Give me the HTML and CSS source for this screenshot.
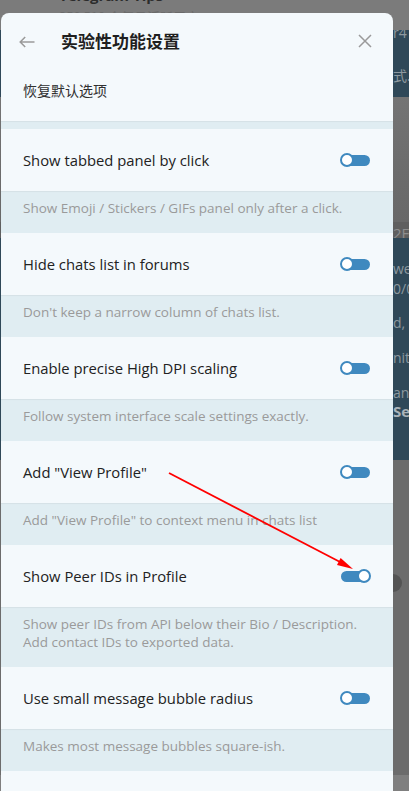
FILE: index.html
```html
<!DOCTYPE html>
<html lang="zh">
<head>
<meta charset="utf-8">
<title>实验性功能设置</title>
<link rel="stylesheet" href="styles.css">
</head>
<body>
<div class="page">
  <div class="backdrop">
    <div class="bg-top">
      <div class="bg-name">Telegram Tips</div>
      <div class="bg-sub">350 510 个每月活跃用户</div>
    </div>
    <div class="bg-band bg-band1">
      <div class="bg-line l1">r4</div>
      <div class="bg-line l2">式...</div>
    </div>
    <div class="bg-photo"></div>
    <div class="bg-label"><span class="bg-frag">2E</span></div>
    <div class="bg-band bg-band2">
      <div class="bg-line l3">we</div>
      <div class="bg-line l4">0/0</div>
      <div class="bg-line l5">d, </div>
      <div class="bg-line l6">nit</div>
      <div class="bg-line l7">an</div>
      <div class="bg-line l8 strong">Se</div>
    </div>
    <div class="bg-gray"><div class="bg-dot"></div></div>
    <div class="bg-foot"></div>
  </div>

  <div class="dialog">
    <div class="dlg-head">
      <svg class="back" width="16" height="12" viewBox="0 0 16 12" aria-hidden="true">
        <path d="M15.5 6H1.2M6.2 1L1.2 6l5 5" fill="none" stroke="#9a9a9a" stroke-width="1.5"/>
      </svg>
      <div class="title">实验性功能设置</div>
      <svg class="close" width="14" height="14" viewBox="0 0 14 14" aria-hidden="true">
        <path d="M1 1l12 12M13 1L1 13" fill="none" stroke="#9a9a9a" stroke-width="1.5"/>
      </svg>
    </div>
    <div class="reset">恢复默认选项</div>
    <div class="gap"></div>

    <div class="opt"><span class="label">Show tabbed panel by click</span><span class="toggle"><i class="track"></i><i class="knob"></i></span></div>
    <div class="desc">Show Emoji / Stickers / GIFs panel only after a click.</div>

    <div class="opt"><span class="label">Hide chats list in forums</span><span class="toggle"><i class="track"></i><i class="knob"></i></span></div>
    <div class="desc">Don't keep a narrow column of chats list.</div>

    <div class="opt"><span class="label">Enable precise High DPI scaling</span><span class="toggle"><i class="track"></i><i class="knob"></i></span></div>
    <div class="desc">Follow system interface scale settings exactly.</div>

    <div class="opt"><span class="label">Add "View Profile"</span><span class="toggle"><i class="track"></i><i class="knob"></i></span></div>
    <div class="desc">Add "View Profile" to context menu in chats list</div>

    <div class="opt"><span class="label">Show Peer IDs in Profile</span><span class="toggle on"><i class="track"></i><i class="knob"></i></span></div>
    <div class="desc">Show peer IDs from API below their Bio / Description.<br>Add contact IDs to exported data.</div>

    <div class="opt"><span class="label">Use small message bubble radius</span><span class="toggle"><i class="track"></i><i class="knob"></i></span></div>
    <div class="desc">Makes most message bubbles square-ish.</div>

    <div class="opt"></div>
  </div>

  <svg class="arrow" width="409" height="791" viewBox="0 0 409 791" aria-hidden="true">
    <line x1="169" y1="473" x2="342" y2="563" stroke="#ff0000" stroke-width="1.8"/>
    <polygon points="353,569 340.6,558.1 337,565.1" fill="#ff0000"/>
  </svg>
</div>
</body>
</html>
```

FILE: styles.css
```css
* { box-sizing: border-box; }
html, body { margin: 0; padding: 0; }
body {
  width: 409px;
  height: 791px;
  overflow: hidden;
  font-family: "Open Sans", "Noto Sans CJK SC", sans-serif;
  background: #6c6c6c;
}
.page {
  position: relative;
  width: 409px;
  height: 791px;
  overflow: hidden;
}

/* ---------- backdrop (dimmed app behind modal) ---------- */
.backdrop {
  display: flex;
  flex-direction: column;
  height: 791px;
}
.bg-top {
  height: 30px;
  background: #7b7b7b;
  padding-left: 59px;
  overflow: hidden;
}
.bg-name {
  margin-top: -13px;
  font-weight: 700;
  font-size: 15px;
  line-height: 16px;
  color: #2c2c2c;
}
.bg-sub {
  margin-top: 6px;
  font-size: 13px;
  line-height: 16px;
  color: #6a6a6a;
  font-family: "Noto Sans CJK SC", sans-serif;
}
.bg-band {
  background: #2f4858;
  overflow: hidden;
  white-space: nowrap;
}
.bg-band1 { height: 67px; }
.bg-band2 { height: 222px; padding-top: 22px; }
.bg-line {
  padding-left: 393px;
  font-size: 14px;
  line-height: 18px;
  color: #8d989f;
}
.bg-band1 .l1 { margin-top: -6px; }
.bg-band1 .l2 { margin-top: 24px; font-family: "Noto Sans CJK SC", sans-serif; }
.bg-band2 .l4 { margin-top: 2px; }
.bg-band2 .l5 { margin-top: 16px; }
.bg-band2 .l6 { margin-top: 17px; }
.bg-band2 .l7 { margin-top: 17px; }
.strong { font-weight: 700; color: #aab3b9; font-size: 15px; }
.bg-photo {
  height: 125px;
  background: linear-gradient(180deg, #747474 0%, #6c6c6c 60%, #686868 100%);
}
.bg-label {
  height: 16px;
  background: #5f5f5f;
  padding-left: 393px;
  white-space: nowrap;
  overflow: hidden;
}
.bg-frag {
  font-size: 15px;
  line-height: 16px;
  color: #8e8e8e;
}
.bg-gray {
  height: 315px;
  background: #6c6c6c;
  padding-top: 114px;
  padding-left: 384px;
}
.bg-dot {
  width: 18px;
  height: 18px;
  border-radius: 50%;
  background: #545454;
}
.bg-foot {
  flex: 1;
  background: #7f7f7f;
}

/* ---------- modal dialog ---------- */
.dialog {
  position: absolute;
  left: 1px;
  top: 13px;
  width: 392px;
  height: 800px;
  background: #f4f9fc;
  border-radius: 8px 8px 0 0;
  overflow: hidden;
}
.dlg-head {
  height: 56px;
  display: flex;
  align-items: center;
  padding-left: 18px;
  padding-right: 21px;
}
.back { display: block; margin-top: 1px; }
.title {
  margin-left: 26px;
  font-family: "Noto Sans CJK SC", sans-serif;
  font-weight: 700;
  font-size: 17px;
  line-height: 24px;
  color: #1f1f1f;
}
.close { display: block; margin-left: auto; }
.reset {
  height: 52px;
  padding: 11px 22px 0;
  font-family: "Noto Sans CJK SC", sans-serif;
  font-size: 14px;
  line-height: 20px;
  color: #303030;
}
.gap {
  height: 8px;
  background: #e0edf2;
  box-shadow: inset 0 1px 1px rgba(0, 0, 0, 0.05);
}
.opt {
  height: 62px;
  display: flex;
  align-items: center;
  justify-content: space-between;
  padding: 0 22px 0 22px;
  background: #f4f9fc;
}
.label {
  font-size: 14.8px;
  line-height: 20px;
  color: #222222;
}
.desc {
  padding: 8px 22px 16px;
  font-size: 13.5px;
  line-height: 18px;
  color: #9a9a9a;
  background: #e0edf2;
  box-shadow: inset 0 1px 1px rgba(0, 0, 0, 0.05);
}

/* ---------- toggle ---------- */
.toggle {
  position: relative;
  display: block;
  width: 31px;
  height: 14px;
  flex: none;
}
.track {
  position: absolute;
  left: 1px;
  right: 1px;
  top: 1.5px;
  height: 11px;
  border-radius: 6px;
  background: #3f89bf;
}
.knob {
  position: absolute;
  top: 0;
  left: 0;
  width: 14px;
  height: 14px;
  border-radius: 50%;
  border: 2px solid #3f89bf;
  background: #ffffff;
}
.toggle.on .knob { left: auto; right: 0; }

/* ---------- annotation arrow ---------- */
.arrow {
  position: absolute;
  left: 0;
  top: 0;
  pointer-events: none;
}
```
